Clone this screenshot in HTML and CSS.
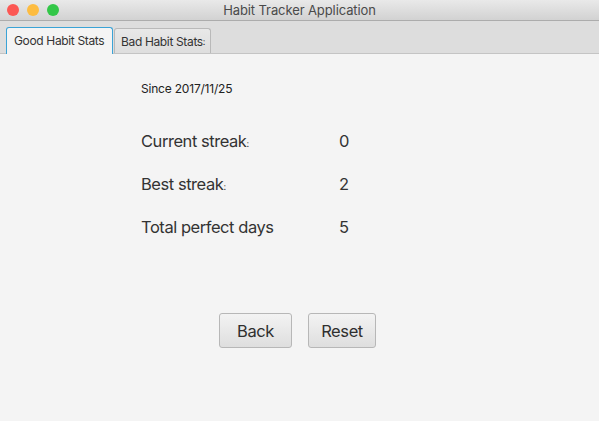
FILE: index.html
```html
<!DOCTYPE html>
<html>
<head>
<meta charset="utf-8">
<link rel="stylesheet" href="styles.css">
</head>
<body>
<div class="window">
  <div class="titlebar">
    <div class="lights">
      <span class="light red"></span>
      <span class="light yellow"></span>
      <span class="light green"></span>
    </div>
    <div class="title">Habit Tracker Application</div>
  </div>
  <div class="tabbar">
    <div class="tab active">Good Habit Stats</div>
    <div class="tab">Bad Habit Stats<span class="trunc">:</span></div>
  </div>
  <div class="content">
    <div class="since">Since 2017/11/25</div>
    <div class="stats">
      <div class="row"><span class="label">Current streak<span class="tiny">:</span></span><span class="value">0</span></div>
      <div class="row"><span class="label">Best streak<span class="tiny">:</span></span><span class="value">2</span></div>
      <div class="row"><span class="label">Total perfect days</span><span class="value">5</span></div>
    </div>
    <div class="buttons">
      <button class="btn back">Back</button>
      <button class="btn reset">Reset</button>
    </div>
  </div>
</div>
</body>
</html>
```
FILE: styles.css
```css
html, body {
  margin: 0;
  padding: 0;
  background: #f4f4f4;
}
body {
  font-family: Inter, "Noto Sans", "Liberation Sans", sans-serif;
  color: #2b2b2b;
}
.window {
  width: 599px;
  height: 421px;
  display: flex;
  flex-direction: column;
  background: #f4f4f4;
  overflow: hidden;
}
.titlebar {
  height: 20px;
  flex: none;
  position: relative;
  background: linear-gradient(#e9e9e9, #d2d2d2);
  border-bottom: 1px solid #acacac;
  display: flex;
  align-items: center;
  justify-content: center;
}
.lights {
  position: absolute;
  left: 7px;
  top: 4px;
  display: flex;
  gap: 8px;
}
.light {
  width: 12px;
  height: 12px;
  border-radius: 50%;
  display: block;
}
.red { background: #fc5753; }
.yellow { background: #fdbc40; }
.green { background: #33c748; }
.title {
  font-size: 13px;
  color: #4a4a4a;
  line-height: 20px;
  letter-spacing: -0.1px;
}
.tabbar {
  height: 32px;
  flex: none;
  background: #dddddd;
  border-bottom: 1px solid #c4c4c4;
  display: flex;
  align-items: flex-end;
  padding-left: 6px;
  gap: 1px;
}
.tab {
  height: 25px;
  box-sizing: border-box;
  border: 1px solid #b9b9b9;
  border-bottom: none;
  border-radius: 3px 3px 0 0;
  background: linear-gradient(#e8e8e8, #dedede);
  font-size: 12px;
  letter-spacing: -0.35px;
  color: #333;
  padding: 0 0 0 6px;
  width: 97px;
  display: flex;
  align-items: center;
  white-space: nowrap;
  overflow: hidden;
}
.tab.active {
  width: 107px;
  border: 1px solid #3ba3d6;
  border-bottom: none;
  background: #f4f4f4;
  margin-bottom: -1px;
  height: 27px;
  padding-left: 7px;
  padding-bottom: 1px;
}
.trunc {
  font-size: 9px;
}
.content {
  flex: 1;
  display: flex;
  flex-direction: column;
  padding-left: 141px;
}
.since {
  font-size: 12px;
  letter-spacing: -0.2px;
  margin-top: 27px;
  line-height: 15px;
  color: #222;
}
.stats {
  margin-top: 34px;
  display: flex;
  flex-direction: column;
  gap: 21px;
}
.row {
  display: flex;
  align-items: center;
  height: 22px;
  font-size: 16.5px;
  color: #333;
}
.label {
  width: 198px;
  letter-spacing: -0.45px;
}
.tiny {
  font-size: 9px;
}
.buttons {
  margin-top: 75px;
  margin-left: 78px;
  display: flex;
  gap: 16px;
}
.btn {
  height: 35px;
  box-sizing: border-box;
  border: 1px solid #b7b7b7;
  border-radius: 3px;
  background: linear-gradient(#f3f3f3, #dedede);
  font-family: inherit;
  font-size: 16.5px;
  color: #2f2f2f;
  padding: 0;
  letter-spacing: -0.4px;
}
.back { width: 73px; }
.reset { width: 68px; }
```
